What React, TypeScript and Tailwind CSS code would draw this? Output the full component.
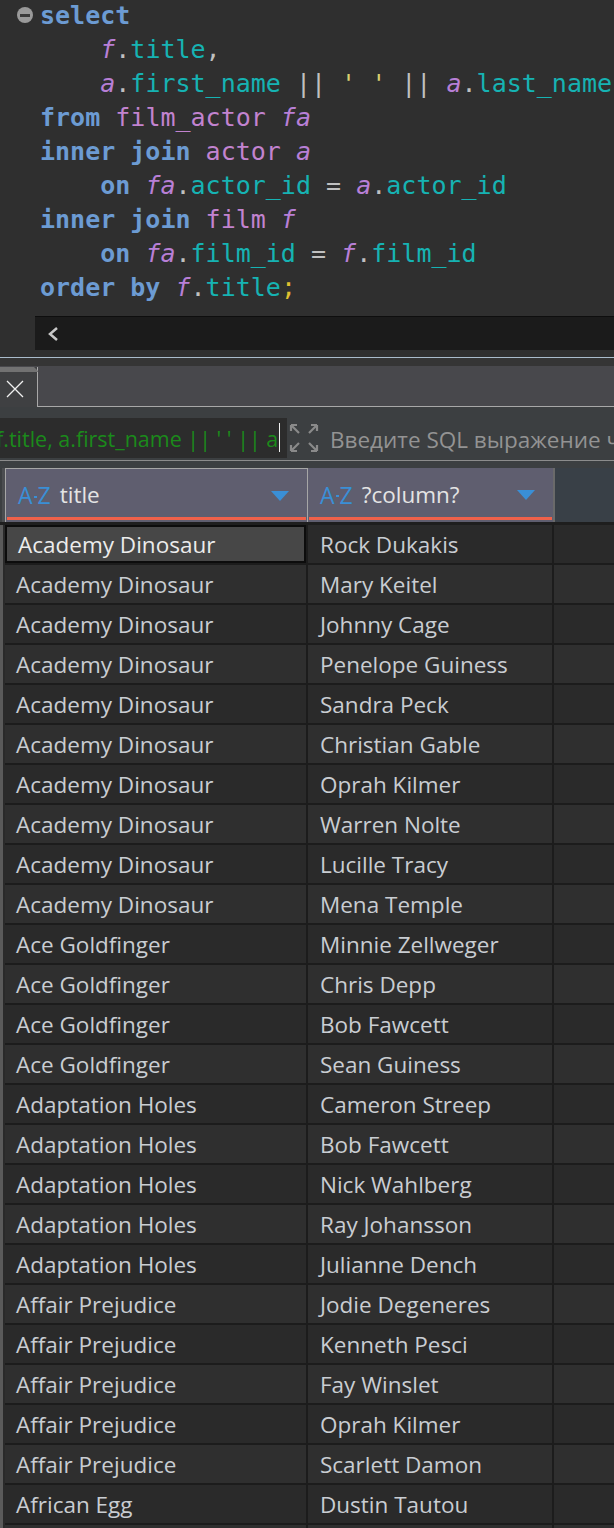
import React from "react";

const rows: [string, string][] = [
  ["Academy Dinosaur", "Rock Dukakis"],
  ["Academy Dinosaur", "Mary Keitel"],
  ["Academy Dinosaur", "Johnny Cage"],
  ["Academy Dinosaur", "Penelope Guiness"],
  ["Academy Dinosaur", "Sandra Peck"],
  ["Academy Dinosaur", "Christian Gable"],
  ["Academy Dinosaur", "Oprah Kilmer"],
  ["Academy Dinosaur", "Warren Nolte"],
  ["Academy Dinosaur", "Lucille Tracy"],
  ["Academy Dinosaur", "Mena Temple"],
  ["Ace Goldfinger", "Minnie Zellweger"],
  ["Ace Goldfinger", "Chris Depp"],
  ["Ace Goldfinger", "Bob Fawcett"],
  ["Ace Goldfinger", "Sean Guiness"],
  ["Adaptation Holes", "Cameron Streep"],
  ["Adaptation Holes", "Bob Fawcett"],
  ["Adaptation Holes", "Nick Wahlberg"],
  ["Adaptation Holes", "Ray Johansson"],
  ["Adaptation Holes", "Julianne Dench"],
  ["Affair Prejudice", "Jodie Degeneres"],
  ["Affair Prejudice", "Kenneth Pesci"],
  ["Affair Prejudice", "Fay Winslet"],
  ["Affair Prejudice", "Oprah Kilmer"],
  ["Affair Prejudice", "Scarlett Damon"],
  ["African Egg", "Dustin Tautou"],
  ["", ""],
];

const K = ({ c }: { c: string }) => <span className="font-bold text-[#6c9bd3]">{c}</span>;
const A = ({ c }: { c: string }) => <span className="italic text-[#b87fd6]">{c}</span>;
const T = ({ c }: { c: string }) => <span className="text-[#c283cf]">{c}</span>;
const C = ({ c }: { c: string }) => <span className="text-[#16b3b3]">{c}</span>;
const P = ({ c }: { c: string }) => <span className="text-[#c0c0c0]">{c}</span>;

function HeaderCell({ label, w, selected }: { label: string; w: string; selected?: boolean }) {
  return (
    <div
      className={`${w} shrink-0 h-[54px] bg-[#5f5e6f] relative flex items-center ${selected ? "border border-[#a6a6a6] border-b-0" : ""}`}
    >
      <div className="flex items-center pl-[12px] gap-[9px] flex-1">
        <span className="text-[#3a8fd6] text-[23px] leading-none flex items-center" style={{ fontFamily: '"Open Sans", sans-serif' }}>
          A<span className="w-[3px] h-[2px] bg-[#3a8fd6] mx-[1px] mt-[2px]" />Z
        </span>
        <span className="text-[#e4e4e4] text-[22.5px] leading-none">{label}</span>
      </div>
      <svg width="18" height="10" viewBox="0 0 18 10" className="mr-[18px]">
        <polygon points="0,0 18,0 9,10" fill="#3a8fd6" />
      </svg>
      <div className="absolute left-[1px] right-[1px] bottom-[2px] h-[3px] bg-[#f0614a]" />
    </div>
  );
}

export default function App() {
  return (
    <div className="w-[614px] h-[1528px] overflow-hidden bg-[#2f2f2f]" style={{ fontFamily: '"Open Sans", sans-serif' }}>
      {/* Editor */}
      <div className="relative h-[358px] bg-[#2f2f2f]">
        <div
          className="absolute left-[17px] top-[8px] w-[16px] h-[16px] rounded-full bg-[#9a9a9a] flex items-center justify-center"
        >
          <div className="w-[10px] h-[3px] bg-[#3a3a3a]" />
        </div>
        <div
          className="pl-[40px] pt-0 text-[25px] leading-[34px] whitespace-pre -mt-[1px]"
          style={{ fontFamily: '"DejaVu Sans Mono", monospace' }}
        >
          <div><K c="select" /></div>
          <div>{"    "}<A c="f" /><P c="." /><C c="title" /><P c="," /></div>
          <div>{"    "}<A c="a" /><P c="." /><C c="first_name" /> <P c="||" /> <span className="text-[#d8d070]">' '</span> <P c="||" /> <A c="a" /><P c="." /><C c="last_name" /></div>
          <div><K c="from" /> <T c="film_actor" /> <A c="fa" /></div>
          <div><K c="inner join" /> <T c="actor" /> <A c="a" /></div>
          <div>{"    "}<K c="on" /> <A c="fa" /><P c="." /><C c="actor_id" /> <P c="=" /> <A c="a" /><P c="." /><C c="actor_id" /></div>
          <div><K c="inner join" /> <T c="film" /> <A c="f" /></div>
          <div>{"    "}<K c="on" /> <A c="fa" /><P c="." /><C c="film_id" /> <P c="=" /> <A c="f" /><P c="." /><C c="film_id" /></div>
          <div><K c="order by" /> <A c="f" /><P c="." /><C c="title" /><span className="text-[#e0c030]">;</span></div>
        </div>
        <div className="absolute left-[35px] right-0 top-[317px] h-[34px] bg-[#1b1b1b] border-t border-[#0e0e0e] flex items-center pl-[12px]">
          <svg width="12" height="14" viewBox="0 0 12 14">
            <polyline points="10,1 3,7 10,13" fill="none" stroke="#c8c8c8" strokeWidth="2.5" />
          </svg>
        </div>
      </div>
      {/* separator */}
      <div className="h-[1px] bg-[#aabccc]" />
      <div className="h-[8px] bg-[#353535]" />
      {/* Tab bar */}
      <div className="h-[41px] bg-[#48484c] flex items-end">
        <div className="relative w-[38px] h-[40px] bg-[#3f4042] border-r border-[#a8a8a8] flex items-center justify-center">
          <div className="absolute left-0 right-[-1px] top-0 h-[5px] bg-[#727272] [clip-path:polygon(0_0,calc(100%-4px)_0,100%_4px,100%_100%,0_100%)]" />
          <svg width="18" height="18" viewBox="0 0 18 18" className="mt-[4px] -ml-[8px]">
            <path d="M1 1 L17 17 M17 1 L1 17" stroke="#f0f0f0" strokeWidth="1.3" />
          </svg>
        </div>
        <div className="flex-1 h-full flex flex-col justify-end">
          <div className="h-[1px] bg-[#a8a8a8]" />
        </div>
      </div>
      {/* Filter bar */}
      <div className="h-[53px] bg-[#3c3f41] flex items-start pt-[11px] overflow-hidden">
        <div className="w-[287px] shrink-0 h-[40px] bg-[#2c2c2c] flex items-center overflow-hidden relative">
          <span className="text-[#1b8a1b] text-[21.5px] whitespace-pre -ml-[4px] mt-[3px]">f.title, a.first_name || ' ' || a</span>
          <div className="absolute left-[279px] top-[5px] w-[1px] h-[29px] bg-[#f0f0f0]" />
        </div>
        <svg width="30" height="30" viewBox="0 0 30 30" className="shrink-0 ml-[2px] mt-[5px]">
          <g stroke="#8a8a8a" strokeWidth="2.2" fill="none">
            <path d="M2 2 L10 10 M2 2 L2 8 M2 2 L8 2" />
            <path d="M28 2 L20 10 M28 2 L28 8 M28 2 L22 2" />
            <path d="M2 28 L10 20 M2 28 L2 22 M2 28 L8 28" />
            <path d="M28 28 L20 20 M28 28 L28 22 M28 28 L22 28" />
          </g>
        </svg>
        <span className="shrink-0 ml-[11px] mt-[5px] text-[22.5px] text-[#939393] whitespace-nowrap">Введите SQL выражение ч</span>
      </div>
      <div className="h-[1px] bg-[#8c8c8c]" />
      <div className="h-[7px] bg-[#3c3f41]" />
      {/* Header */}
      <div className="flex h-[54px] bg-[#3c3f41]">
        <div className="w-[5px] h-full bg-[#4b4d50] border-l-[2px] border-[#3c3f41]" />
        <HeaderCell label="title" w="w-[303px]" selected />
        <HeaderCell label="?column?" w="w-[245px]" />
        <div className="w-[2px] bg-[#6a6a6a]" />
        <div className="flex-1 bg-[#394047]" />
      </div>
      <div className="h-[3px] bg-[#1e1e1e]" />
      {/* Rows */}
      <div className="flex flex-col">
        {rows.map((r, i) => {
          const bg = i % 2 === 0 ? "bg-[#2a2a2a]" : "bg-[#2f2f2f]";
          return (
            <div key={i} className="flex h-[40px] bg-[#1c1c1c]">
              <div className="w-[5px] h-full bg-[#2a2a2a] border-l-[3px] border-[#5a5a5a]" />
              <div
                className={`w-[301px] h-[38px] flex items-center pl-[11px] pt-[2px] text-[22.5px] ${
                  i === 0 ? "bg-[#474747] border-[2px] border-[#0c0c0c] text-[#ececec] pl-[9px]" : `${bg} text-[#c9cdd2]`
                }`}
              >
                {r[0]}
              </div>
              <div className="w-[2px]" />
              <div className={`w-[244px] h-[38px] flex items-center pl-[12px] pt-[2px] text-[22.5px] text-[#c9cdd2] ${bg}`}>{r[1]}</div>
              <div className="w-[2px]" />
              <div className={`flex-1 h-[38px] ${bg}`} />
            </div>
          );
        })}
      </div>
    </div>
  );
}
